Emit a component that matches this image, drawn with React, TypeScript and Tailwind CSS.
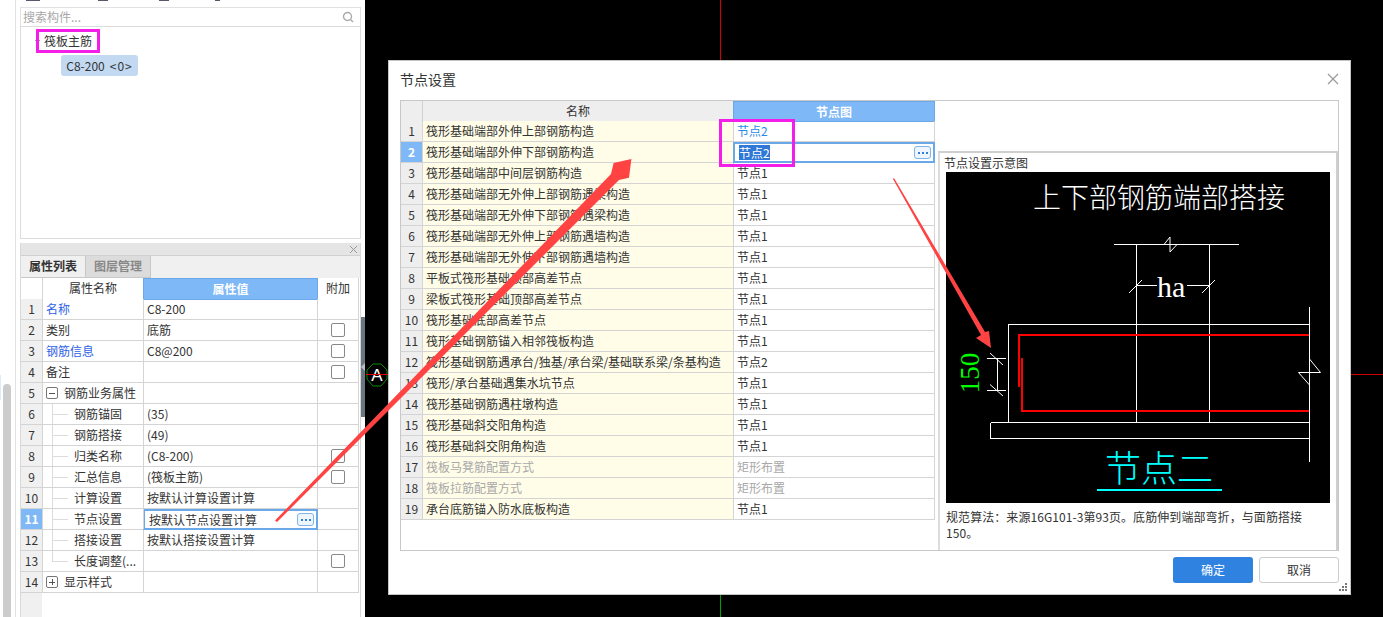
const propRows = [
  { n: 1, name: "名称", value: "C8-200", blue: true, check: false },
  { n: 2, name: "类别", value: "底筋", check: true },
  { n: 3, name: "钢筋信息", value: "C8@200", blue: true, check: true },
  { n: 4, name: "备注", value: "", check: true },
  { n: 5, name: "钢筋业务属性", value: "", toggle: "-" },
  { n: 6, name: "钢筋锚固", value: "(35)", child: true },
  { n: 7, name: "钢筋搭接", value: "(49)", child: true },
  { n: 8, name: "归类名称", value: "(C8-200)", child: true, check: true },
  { n: 9, name: "汇总信息", value: "(筏板主筋)", child: true, check: true },
  { n: 10, name: "计算设置", value: "按默认计算设置计算", child: true },
  { n: 11, name: "节点设置", value: "按默认节点设置计算", child: true, selected: true },
  { n: 12, name: "搭接设置", value: "按默认搭接设置计算", child: true },
  { n: 13, name: "长度调整(...", value: "", child: true, check: true, last: true },
  { n: 14, name: "显示样式", value: "", toggle: "+" },
];

const nodeRows = [
  ["筏形基础端部外伸上部钢筋构造", "节点2"],
  ["筏形基础端部外伸下部钢筋构造", "节点2"],
  ["筏形基础端部中间层钢筋构造", "节点1"],
  ["筏形基础端部无外伸上部钢筋遇梁构造", "节点1"],
  ["筏形基础端部无外伸下部钢筋遇梁构造", "节点1"],
  ["筏形基础端部无外伸上部钢筋遇墙构造", "节点1"],
  ["筏形基础端部无外伸下部钢筋遇墙构造", "节点1"],
  ["平板式筏形基础顶部高差节点", "节点1"],
  ["梁板式筏形基础顶部高差节点", "节点1"],
  ["筏形基础底部高差节点", "节点1"],
  ["筏形基础钢筋锚入相邻筏板构造", "节点1"],
  ["筏形基础钢筋遇承台/独基/承台梁/基础联系梁/条基构造", "节点2"],
  ["筏形/承台基础遇集水坑节点", "节点1"],
  ["筏形基础钢筋遇柱墩构造", "节点1"],
  ["筏形基础斜交阳角构造", "节点1"],
  ["筏形基础斜交阴角构造", "节点1"],
  ["筏板马凳筋配置方式", "矩形布置"],
  ["筏板拉筋配置方式", "矩形布置"],
  ["承台底筋锚入防水底板构造", "节点1"],
];

function DotsButton() {
  return (
    <span className="flex h-[13px] w-[17px] items-center justify-center gap-[2px] rounded-[3px] border border-[#7eb4ea] bg-[#eef5fc]">
      <i className="h-[2px] w-[2px] bg-[#2f7fd8]" />
      <i className="h-[2px] w-[2px] bg-[#2f7fd8]" />
      <i className="h-[2px] w-[2px] bg-[#2f7fd8]" />
    </span>
  );
}

function PropertyPanel() {
  return (
    <div className="flex flex-1 flex-col border-x border-[#d9d9d9] bg-white">
      <div className="flex h-[12px] items-center justify-end bg-[#e5e5e5] pr-[2px] text-[#999]">
        <svg width="9" height="9" viewBox="0 0 9 9" stroke="currentColor" fill="none">
          <path d="M1 1l7 7M8 1l-7 7" />
        </svg>
      </div>
      <div className="flex h-[23px] border-t border-[#d0d0d0] bg-[#f0f0f0] text-[12px]">
        <div className="flex w-[65px] items-center justify-center border-r border-b border-[#c8c8c8] bg-[#f0f0f0] pb-[1px] font-bold text-[#333]">属性列表</div>
        <div className="flex w-[65px] items-center justify-center border-r border-b border-[#c8c8c8] bg-[#dcdcdc] pb-[1px] font-bold text-[#888]">图层管理</div>
      </div>
      <div className="relative flex-1 text-[12px] text-[#333]">
        <div className="absolute inset-y-0 left-0 w-[21px] bg-[#f0f0f0]" />
        <div className="relative w-[338px]">
          <div className="grid h-[21px] grid-cols-[22px_101px_174px_41px] border-b border-[#d4d4d4] leading-[20px]">
            <div className="border-r border-[#d4d4d4] bg-white" />
            <div className="border-r border-[#d4d4d4] bg-white text-center">属性名称</div>
            <div className="-ml-px border border-[#6aa8ea] bg-[#7eb8f6] text-center font-bold text-white">属性值</div>
            <div className="border-r border-[#d4d4d4] bg-white text-center">附加</div>
          </div>
          {propRows.map((r) => (
            <div key={r.n} className="grid h-[21px] grid-cols-[22px_101px_174px_41px] border-b border-[#d4d4d4] leading-[20px]">
              <div className={r.selected ? "border-r border-[#d4d4d4] bg-[#7eb8f6] text-center font-bold text-white" : "border-r border-[#d4d4d4] bg-[#f0f0f0] text-center"}>{r.n}</div>
              <div className={`relative truncate border-r border-[#d4d4d4] ${r.child ? "pl-[31px]" : r.toggle ? "pl-[21px]" : "pl-[3px]"} ${r.blue ? "text-[#2f62e6]" : ""}`}>
                {r.child && (
                  <>
                    <i className={`absolute left-[9px] top-0 w-px bg-[#dcdcdc] ${r.last ? "h-[10px]" : "h-[21px]"}`} />
                    <i className="absolute left-[9px] top-[10px] h-px w-[16px] bg-[#dcdcdc]" />
                  </>
                )}
                {r.toggle && (
                  <span className="absolute left-[3px] top-[4px] flex h-[12px] w-[12px] items-center justify-center rounded-[2px] border border-[#777] leading-none text-[#555]">
                    <i className="absolute h-px w-[6px] bg-[#555]" />
                    {r.toggle === "+" && <i className="absolute h-[6px] w-px bg-[#555]" />}
                  </span>
                )}
                {r.name}
              </div>
              {r.selected ? (
                <div className="-mb-px -ml-px flex h-[21px] items-center justify-between border-2 border-[#6aa8ea] bg-white pl-[4px] pr-[2px]">
                  <span>{r.value}</span>
                  <DotsButton />
                </div>
              ) : (
                <div className="border-r border-[#d4d4d4] pl-[3px]">{r.value}</div>
              )}
              <div className="flex items-center justify-center border-r border-[#d4d4d4]">
                {r.check && <span className="h-[14px] w-[14px] rounded-[2px] border border-[#888] bg-white" />}
              </div>
            </div>
          ))}
        </div>
      </div>
    </div>
  );
}

function LeftColumn() {
  return (
    <aside className="flex h-full w-[365px] shrink-0 bg-white">
      <div className="relative flex h-full w-[16px] shrink-0 items-end justify-center border-r border-[#e2e2e2] pr-[1px]">
        <i className="absolute left-0 top-[375px] h-[25px] w-px bg-[#dbeafe]" />
        <div className="h-[233px] w-[8px] rounded-t-[4px] bg-[#cccccc]" />
      </div>
      <div className="ml-[4px] flex w-[341px] flex-col">
        <div className="flex h-[8px] shrink-0 items-start gap-[52px] border-b border-[#e2e2e2] pl-[6px]">
          <i className="h-[1px] w-[14px] bg-[#55596a]" />
          <i className="ml-[6px] h-[1px] w-[10px] bg-[#55596a]" />
          <i className="ml-[-1px] h-[1px] w-[10px] bg-[#55596a]" />
          <i className="ml-[-6px] h-[1px] w-[5px] bg-[#55596a]" />
        </div>
        <div className="flex h-[18px] shrink-0 items-center justify-between border-x border-[#e2e2e2] pl-[2px] pr-[6px] text-[12px] text-[#a8a8a8]">
          <span>搜索构件...</span>
          <svg width="12" height="12" viewBox="0 0 12 12" fill="none" stroke="#aaa" strokeWidth="1.4">
            <circle cx="5.5" cy="5.5" r="4" />
            <path d="M8.5 8.5l2.5 2.5" />
          </svg>
        </div>
        <div className="h-[213px] shrink-0 border border-[#dcdcdc] pt-[3px] text-[12px] text-[#333]">
          <div className="flex h-[21px] items-center pl-[14px]">
            <i className="mr-[3px] h-px w-[5px] bg-[#999]" />
            <span className="pl-[1px]">筏板主筋</span>
          </div>
          <div className="ml-[40px] mt-[4px] flex h-[21px] w-[77px] items-center justify-center gap-[5px] rounded-[3px] bg-[#c2d9f1]">
            <span>C8-200</span>
            <span className="tracking-[1px]">&lt;0&gt;</span>
          </div>
        </div>
        <div className="h-[4px] shrink-0" />
        <PropertyPanel />
      </div>
      <div className="relative ml-auto mt-[317px] h-[100px] w-[4px] bg-[#6b7680]">
        <svg className="absolute left-0 top-[46px]" width="4" height="8" viewBox="0 0 4 8" fill="#b8bec4">
          <path d="M4 0v8L0 4z" />
        </svg>
      </div>
    </aside>
  );
}

function NodeTable() {
  return (
    <div className="w-[534px] shrink-0 text-[12px] text-[#333]">
      <div className="grid h-[20px] grid-cols-[22px_311px_201px] border-b border-[#d0d0d0] leading-[19px]">
        <div className="border-r border-[#d0d0d0] bg-[#eeeeee]" />
        <div className="border-r border-[#d0d0d0] bg-[#eeeeee] text-center">名称</div>
        <div className="-ml-px border border-[#6aa8ea] bg-[#7eb8f6] text-center font-bold text-white">节点图</div>
      </div>
      {nodeRows.map(([name, val], i) => {
        const dim = i === 16 || i === 17;
        return (
          <div key={i} className="grid h-[21px] grid-cols-[22px_311px_201px] border-b border-[#d4d4d4] leading-[20px]">
            <div className={i === 1 ? "border-r border-[#d4d4d4] bg-[#7eb8f6] text-center font-bold text-white" : "border-r border-[#d4d4d4] bg-[#eeeeee] text-center"}>{i + 1}</div>
            <div className={`border-r border-[#d4d4d4] bg-[#fffde8] pl-[3px] ${dim ? "text-[#a8a8a8]" : ""}`}>{name}</div>
            {i === 1 ? (
              <div className="-mb-px -ml-px flex h-[21px] items-center justify-between border-2 border-[#6aa8ea] bg-white pl-[4px] pr-[2px]">
                <span className="bg-[#2f78d8] leading-[15px] text-white">{val}</span>
                <DotsButton />
              </div>
            ) : (
              <div className={`border-r border-[#d4d4d4] pl-[3px] ${dim ? "text-[#a8a8a8]" : ""} ${i === 0 ? "text-[#2a8ae8]" : ""}`}>{val}</div>
            )}
          </div>
        );
      })}
    </div>
  );
}

function NodeDiagram() {
  const white = { stroke: "#fff", strokeWidth: 1, fill: "none" };
  return (
    <svg className="block h-[331px] w-[384px] shrink-0" viewBox="946 172 384 331" style={{ background: "#000" }}>
      <text x="1033" y="208" fontSize="28" fill="#fff" fontWeight="300" fontFamily="'Noto Sans CJK SC',sans-serif">上下部钢筋端部搭接</text>
      <g {...white} shapeRendering="crispEdges">
        <path d="M1114 244.5H1239M1136.5 244.5V422.5M1209.5 244.5V422.5" />
        <path d="M1008.5 422.5V324.5H1309.5M1309.5 307V462M990.5 422.5H1309.5M990.5 422.5V438.5H1309.5" />
        <path d="M987 358.5H1006M987 390.5H1006M997.5 358.5V390.5M1136.5 285.5H1157M1187 285.5H1209.5" />
      </g>
      <g {...white}>
        <path d="M1164 244.5L1170 237V252L1177 244.5" />
        <path d="M1309.5 359L1320.5 372.5H1298.5L1309.5 385" />
        <path d="M1129 293L1142 280M1202 293L1215 280M990 353L1003 365M990 384.5L1003 396" />
      </g>
      <g stroke="#ff0000" strokeWidth="2" fill="none">
        <path d="M1019 387V335H1309" />
        <path d="M1022 358V411H1309" />
      </g>
      <text x="1157" y="297" fontSize="30" fill="#fff" fontFamily="'Liberation Serif',serif">ha</text>
      <text x="0" y="0" fontSize="27" fill="#00ff00" fontFamily="'Liberation Serif',serif" textAnchor="middle" transform="translate(979 373) rotate(-90)">150</text>
      <text x="1105" y="482" fontSize="36" fill="#00ffff" fontWeight="300" fontFamily="'Noto Sans CJK SC',sans-serif">节点二</text>
      <path d="M1097 490H1222" stroke="#00ffff" strokeWidth="2" />
    </svg>
  );
}

function Dialog() {
  return (
    <div className="absolute left-[388px] top-[60px] flex h-[535px] w-[963px] flex-col border border-[#c4c4c4] bg-white text-[12px] text-[#333]">
      <div className="flex h-[39px] shrink-0 items-center justify-between px-[11px] pb-[3px]">
        <span className="text-[14px] leading-[36px]">节点设置</span>
        <svg width="12" height="12" viewBox="0 0 12 12" stroke="#999" fill="none" strokeWidth="1.2">
          <path d="M1 1l10 10M11 1L1 11" />
        </svg>
      </div>
      <div className="ml-[11px] flex h-[451px] w-[939px] border border-[#c8c8c8]">
        <NodeTable />
        <div className="ml-[3px] mt-[50px] flex w-[400px] flex-col border-2 border-b-0 border-[#cfcfcf] border-l-[#dcdcdc]">
          <div className="h-[19px] pl-[4px] leading-[20px]">节点设置示意图</div>
          <div className="flex justify-center">
            <NodeDiagram />
          </div>
          <p className="mt-[6px] pl-[6px] leading-[16px] tracking-[0.07px]">
            规范算法：来源16G101-3第93页。底筋伸到端部弯折，与面筋搭接
            <br />
            150。
          </p>
        </div>
      </div>
      <div className="mr-[11px] mt-[6px] flex justify-end gap-[6px]">
        <button className="h-[26px] w-[80px] rounded-[3px] bg-[#2f82e0] text-white">确定</button>
        <button className="h-[26px] w-[80px] rounded-[3px] border border-[#ccc] bg-white">取消</button>
      </div>
      {/* resize grip */}
      <svg className="absolute bottom-[2px] right-[2px]" width="9" height="9" viewBox="0 0 9 9" fill="#777">
        <rect x="6" y="0" width="2" height="2" />
        <rect x="3" y="3" width="2" height="2" />
        <rect x="6" y="3" width="2" height="2" />
        <rect x="0" y="6" width="2" height="2" />
        <rect x="3" y="6" width="2" height="2" />
        <rect x="6" y="6" width="2" height="2" />
      </svg>
    </div>
  );
}

export default function App() {
  return (
    <div className="relative flex h-[617px] w-[1383px] overflow-hidden bg-black font-['Noto_Sans_CJK_SC','Noto_Sans',sans-serif]">
      <LeftColumn />
      {/* CAD canvas */}
      <div className="relative flex-1 bg-black">
        <i className="absolute left-[355px] top-0 h-[60px] w-px bg-[#d00000]" />
        <i className="absolute bottom-0 left-[355px] h-[22px] w-px bg-[#00a000]" />
        <i className="absolute right-0 top-[374px] h-px w-[32px] bg-[#d00000]" />
        <svg className="absolute left-0 top-[362px]" width="24" height="26" viewBox="0 0 24 26">
          <path d="M8 2h8l6 6v9l-6 7H8l-6-7V8z" fill="none" stroke="#0a8a0a" />
          <text x="12" y="19" fontSize="17" fill="#fff" textAnchor="middle" fontFamily="'Liberation Sans',sans-serif">A</text>
          <path d="M1 12.5h22" stroke="#e00000" strokeWidth="1" />
        </svg>
      </div>
      <Dialog />
      {/* annotations drawn over the screenshot */}
      <div className="pointer-events-none absolute left-[36px] top-[29px] h-[24px] w-[64px] border-[3px] border-[#f31ee8]" />
      <div className="pointer-events-none absolute left-[719px] top-[119px] h-[48px] w-[76px] border-[3px] border-[#f31ee8]" />
      <svg className="pointer-events-none absolute inset-0" width="1383" height="617" fill="#ff4343">
        <path d="M275 520.5L611 174L613.6 163L631.4 159L629 177.7L619 180L277 522Z" />
        <path d="M894 178L985 332L989 331L991 348L976 338L981 335L893 179Z" />
      </svg>
    </div>
  );
}
